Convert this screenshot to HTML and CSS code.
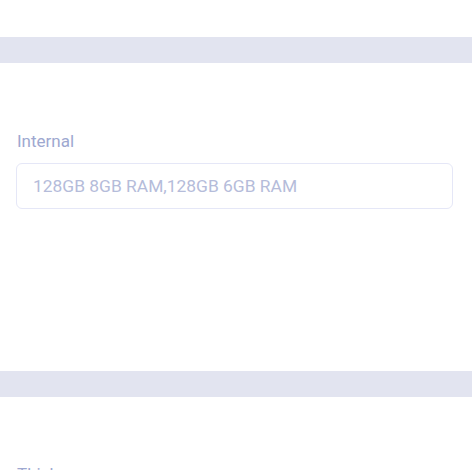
FILE: index.html
```html
<!DOCTYPE html>
<html>
<head>
<meta charset="utf-8">
<link rel="stylesheet" href="styles.css">
</head>
<body>
<div class="page">
  <div class="top-space"></div>
  <div class="band"></div>
  <section class="section">
    <label class="label" for="internal">Internal</label>
    <input class="field" id="internal" type="text" placeholder="128GB 8GB RAM,128GB 6GB RAM">
  </section>
  <div class="band"></div>
  <section class="section section-next">
    <label class="label">Thickness</label>
  </section>
</div>
</body>
</html>
```
FILE: styles.css
```css
html, body {
  margin: 0;
  padding: 0;
  background: #ffffff;
}
.page {
  font-family: Roboto, "Liberation Sans", sans-serif;
  display: flex;
  flex-direction: column;
  height: 470px;
  overflow: hidden;
}
.top-space {
  height: 37px;
  flex: none;
}
.band {
  height: 26px;
  flex: none;
  background: #e2e4f0;
}
.section {
  display: flex;
  flex-direction: column;
  padding: 67px 19px 0 16px;
  height: 308px;
  box-sizing: border-box;
  flex: none;
}
.section-next {
  padding-top: 66px;
}
.label {
  display: block;
  font-size: 17px;
  line-height: 22px;
  color: #9ea8d0;
  padding-left: 1px;
  margin-bottom: 11px;
}
.field {
  height: 46px;
  box-sizing: border-box;
  border: 1px solid #e5e7f7;
  border-radius: 6px;
  padding: 0 16px;
  font-family: Roboto, "Liberation Sans", sans-serif;
  font-size: 17.4px;
  color: #6b7399;
  outline: none;
  background: #fff;
  width: 100%;
}
.field::placeholder {
  color: #b5bcda;
  opacity: 1;
}
```
